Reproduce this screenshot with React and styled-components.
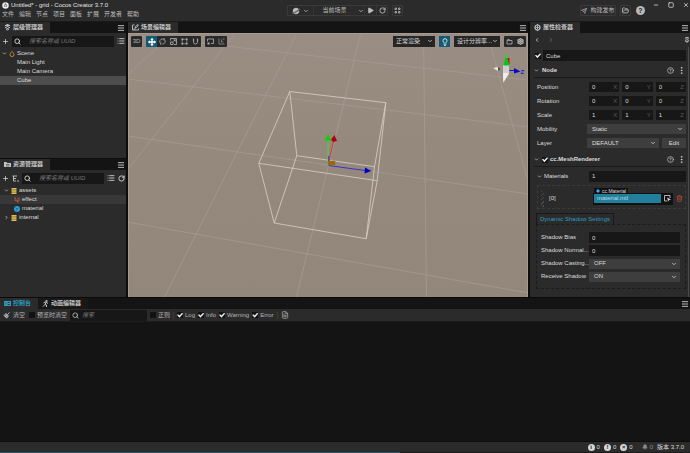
import React from "react";
import styled, { createGlobalStyle, css } from "styled-components";
import {
  ChevronDown, ChevronRight, ChevronLeft, Menu, List, RotateCw, Search, Plus, Play,
  FolderOpen, Minus, Square, X, Pin, CircleHelp, EllipsisVertical, Trash2, Lightbulb, Settings,
  Send, Bell, FileText,
} from "lucide-react";

const color = {
  panel: "#2b2b2b",
  dark: "#141414",
  field: "#171717",
  select: "#3e3e3e",
  line: "#1a1a1a",
  text: "#dcdcdc",
  dim: "#8a8a8a",
  accent: "#2d9cc0",
};

const GlobalStyle = createGlobalStyle`
  * { box-sizing: border-box; }
  html, body, #root { height: 100%; }
  body {
    margin: 0;
    overflow: hidden;
    background: #0d0d0d;
    color: ${color.text};
    font: 6px/9px "Liberation Sans", "Noto Sans CJK SC", sans-serif;
  }
  button, input, select { font: inherit; color: inherit; margin: 0; padding: 0; border: 0; border-radius: 0; outline: 0; }
  button { background: none; display: inline-flex; align-items: center; justify-content: center; }
  svg { display: block; flex: none; }
`;

const Page = styled.div`
  height: 100vh;
  display: grid;
  grid-template-rows: 22px minmax(0, 275fr) minmax(0, 144fr) 11px 1px;
`;

/* ---------- header ---------- */
const Header = styled.header`
  display: grid;
  grid-template-columns: 1fr auto 1fr;
  background: ${color.panel};
  border-bottom: 1px solid ${color.line};
`;
const TitleLine = styled.div`
  display: flex;
  align-items: center;
  gap: 2px;
  height: 10px;
  padding-left: 2px;
  white-space: nowrap;
  color: #e6e6e6;
`;
const MenuBar = styled.nav`
  display: flex;
  gap: 5px;
  padding-left: 2px;
  color: #bcbcbc;
`;
const Centered = styled.div`
  display: flex;
  align-items: center;
  gap: 4px;
`;
const Outlined = styled.div`
  display: flex;
  align-items: center;
  height: 11px;
  border: 1px solid #3a3a3a;
  border-radius: 1px;
  color: #bdbdbd;
  > * + * { border-left: 1px solid #363636; }
`;
const HeadButton = styled.button`
  width: ${(p) => p.$w}px;
  height: 9px;
  gap: 3px;
  white-space: nowrap;
`;
const HeaderRight = styled.div`
  display: flex;
  justify-content: flex-end;
  gap: 8px;
`;
const WindowControls = styled.div`
  display: flex;
  gap: 9px;
  height: 9px;
  padding-right: 1px;
`;
const HelpButton = styled.button`
  width: 9px;
  height: 9px;
  margin-left: 1px;
  border-radius: 50%;
  background: #b9b9b9;
  color: #222;
  font-weight: bold;
  font-size: 7px;
`;

/* ---------- panels ---------- */
const Main = styled.main`
  display: grid;
  grid-template-columns: 126px minmax(0, 1fr) 160px;
  column-gap: 2px;
  min-height: 0;
`;
const LeftColumn = styled.div`
  display: grid;
  grid-template-rows: 136fr 138fr;
  row-gap: 1px;
  min-height: 0;
`;
const Panel = styled.section`
  display: flex;
  flex-direction: column;
  min-width: 0;
  min-height: 0;
  overflow: hidden;
  background: ${color.panel};
`;
const Tabs = styled.div`
  display: flex;
  flex: none;
  height: 11px;
  background: ${color.dark};
`;
const DockTabs = styled(Tabs)`
  height: 12px;
  border-top: 1px solid #0a0a0a;
`;
const Tab = styled.button`
  gap: 2px;
  padding: 0 7px 0 4px;
  font-weight: bold;
  white-space: nowrap;
  background: ${(p) => (p.$idle ? "#181818" : color.panel)};
  color: ${(p) => (p.$accent ? color.accent : "#c4c4c4")};
`;
const TabMenu = styled.button`
  margin-left: auto;
  padding-right: 1px;
`;
const Tools = styled.div`
  display: flex;
  flex: none;
  align-items: center;
  gap: 3px;
  height: 15px;
  padding: 1px 1px 0 2px;
`;
const SearchBox = styled.label`
  display: flex;
  flex: ${(p) => (p.$fixed ? "none" : "1")};
  width: ${(p) => (p.$fixed ? "77px" : "auto")};
  min-width: 0;
  align-items: center;
  gap: ${(p) => (p.$fixed ? 3 : 8)}px;
  height: 11px;
  padding-left: 2px;
  background: ${color.field};
  input { flex: 1; min-width: 0; background: none; }
  input::placeholder { color: #777; font-style: italic; opacity: 1; }
`;
const Tree = styled.ul`
  margin: 1px 0 0;
  padding: 0;
  list-style: none;
`;
const TreeRow = styled.li`
  display: flex;
  align-items: center;
  gap: 2px;
  height: 9px;
  padding-left: ${(p) => p.$indent}px;
  background: ${(p) => p.$bg || "transparent"};
`;

/* ---------- scene ---------- */
const Viewport = styled.div`
  position: relative;
  flex: 1;
  min-height: 0;
  overflow: hidden;
  border: 1px solid #a69a91;
  border-bottom: 0;
  background: linear-gradient(#9a8d83, #95897d 45%, #93877b);
`;
const SceneSvg = styled.svg`
  position: absolute;
  inset: 0;
  width: 100%;
  height: 100%;
`;
const Overlay = styled.div`
  position: absolute;
  inset: 2px 1px auto 2px;
  display: flex;
  gap: 4px;
`;
const ToolGroup = styled.div`
  display: flex;
  height: 11px;
  background: #292929;
  border-radius: 1px;
`;
const ToolButton = styled.button`
  width: 11px;
  height: 11px;
  background: ${(p) => (p.$on ? "#135a76" : "transparent")};
  color: ${(p) => (p.$on ? "#ffffff" : "#b4b4b4")};
`;
const Spring = styled.div`
  flex: 1;
`;

/* ---------- form controls ---------- */
const SelectWrap = styled.div`
  position: relative;
  flex: ${(p) => (p.$w ? "none" : "1")};
  width: ${(p) => (p.$w ? p.$w + "px" : "auto")};
  height: ${(p) => (p.$overlay ? 11 : 10)}px;
  background: ${(p) => (p.$overlay ? "#252525" : color.select)};
  select {
    appearance: none;
    width: 100%;
    height: 100%;
    padding: 0 0 0 ${(p) => (p.$overlay ? 3 : 5)}px;
    background: none;
  }
  svg {
    position: absolute;
    right: ${(p) => (p.$overlay ? 2 : 3)}px;
    top: 2px;
    pointer-events: none;
  }
`;
const Check = styled.input`
  appearance: none;
  flex: none;
  width: 6px;
  height: 6px;
  background: #121212;
  &:checked::before {
    content: "";
    display: block;
    width: 6px;
    height: 6px;
    background: #eeeeee;
    clip-path: polygon(0 52%, 18% 36%, 40% 60%, 84% 12%, 100% 28%, 40% 94%);
  }
`;
const TextInput = styled.input`
  flex: 1;
  min-width: 0;
  width: 100%;
  height: ${(p) => (p.$tall ? 11 : 10)}px;
  padding: 0 3px;
  background: ${color.field};
`;
const InspectorBody = styled.div`
  flex: 1;
  min-height: 0;
  overflow: hidden;
  margin-right: 1px;
  padding: 3px 2px 4px 4px;
  border-right: 1px solid #4a4a4a;
`;
const InspectorNav = styled(Tools)`
  gap: 8px;
  padding: 0 0 0 4px;
  height: 14px;
`;
const NameRow = styled.div`
  display: flex;
  align-items: center;
  gap: 2px;
  padding-left: 1px;
`;
const SectionHead = styled.div`
  display: flex;
  align-items: center;
  gap: 3px;
  height: 14px;
  margin: 3px 0 2px;
  border-bottom: 1px solid ${color.line};
  font-weight: bold;
`;
const Field = styled.div`
  display: grid;
  grid-template-columns: ${(p) => (p.$nested ? 48 : 50)}px minmax(0, 1fr);
  align-items: center;
  height: ${(p) => (p.$nested ? 13 : 14)}px;
  padding-left: ${(p) => (p.$nested ? 0 : 3)}px;
`;
const FieldLabel = styled.label`
  display: flex;
  align-items: center;
  gap: 2px;
  white-space: nowrap;
`;
const FieldBody = styled.div`
  display: flex;
  gap: 3px;
  min-width: 0;
  padding-left: ${(p) => (p.$inset ? 2 : 0)}px;
`;
const AxisBox = styled.label`
  display: flex;
  flex: 1;
  min-width: 0;
  align-items: center;
  padding-right: 2px;
  background: ${color.field};
  color: #5c5c5c;
  input { color: ${color.text}; background: none; }
`;
const EditButton = styled.button`
  width: 24px;
  height: 10px;
  background: ${color.select};
`;
const MaterialItem = styled.div`
  display: flex;
  align-items: center;
  height: 24px;
  margin: 2px 0 4px 3px;
  padding: 3px 2px 0 3px;
  border: 1px dashed #3b3b3b;
`;
const DragHandle = styled.div`
  width: 3px;
  height: 16px;
  background: repeating-linear-gradient(135deg, #4a4a4a 0 1px, transparent 1px 3px);
`;
const ItemIndex = styled.span`
  width: 49px;
  padding-left: 5px;
`;
const AssetSlot = styled.div`
  position: relative;
  display: flex;
  flex: 1;
  align-items: center;
  gap: 3px;
  height: 12px;
  margin-right: 3px;
  padding: 1px 2px 1px 1px;
  background: #111111;
`;
const AssetTag = styled.span`
  position: absolute;
  left: 1px;
  top: -5px;
  display: flex;
  align-items: center;
  gap: 2px;
  height: 6px;
  padding: 0 2px;
  background: #111111;
  font-size: 5px;
  line-height: 6px;
  white-space: nowrap;
`;
const AssetName = styled.button`
  flex: 1;
  height: 9px;
  padding-left: 3px;
  justify-content: flex-start;
  background: #227f9b;
  color: #b9dce6;
`;
const ShadowTab = styled.button`
  height: 11px;
  padding: 0 3px;
  border: 1px solid #181818;
  border-bottom: 0;
  color: ${color.accent};
`;
const ShadowBox = styled.div`
  padding: 6px 5px 5px 4px;
  border: 1px dashed #1c1c1c;
`;
const ShadowGroup = styled.div`
  margin-left: 2px;
`;

/* ---------- console ---------- */
const ConsoleTools = styled(Tools)`
  height: 13px;
  padding: 0 4px;
  border-bottom: 1px solid #1c1c1c;
  color: #b5b5b5;
`;
const CheckLabel = styled.label`
  display: flex;
  align-items: center;
  gap: 2px;
  margin-left: ${(p) => p.$gap || 0}px;
  white-space: nowrap;
`;
const Divider = styled.i`
  width: 1px;
  height: 7px;
  background: #3a3a3a;
`;
const ConsoleOutput = styled.div`
  flex: 1;
  background: ${color.dark};
`;
const StatusBar = styled.footer`
  display: flex;
  align-items: center;
  justify-content: flex-end;
  gap: 4px;
  padding-right: 6px;
  border-top: 1px solid #0d0d0d;
  background: ${color.panel};
`;
const Status = styled.span`
  display: flex;
  align-items: center;
  gap: 2px;
  ${(p) => p.$dim && css`
    margin-left: 5px;
    color: ${color.dim};
  `}
`;
const Dot = styled.span`
  width: 7px;
  height: 7px;
  border-radius: 50%;
  background: #d5d5d5;
  color: #222;
  font: bold 6px/7px "Liberation Sans", sans-serif;
  text-align: center;
`;
const Progress = styled.div`
  background: linear-gradient(90deg, #2b5564 58%, #1c1c1c 58%);
`;

/* ---------- drawings ---------- */
const Glyph = ({ size = 7, children }) => (
  <svg width={size} height={size} viewBox="0 0 14 14" fill="none" stroke="currentColor" strokeWidth="1.6">
    {children}
  </svg>
);
const MoveIcon = () => (
  <Glyph size={8}>
    <path d="M7 1v12M1 7h12" strokeWidth="2.4" />
    <path d="M4 3.6 7 0l3 3.6zM4 10.4 7 14l3-3.6zM3.6 4 0 7l3.6 3zM10.4 4 14 7l-3.6 3z" fill="currentColor" stroke="none" />
  </Glyph>
);
const RotateIcon = () => (
  <Glyph><path d="M3 10.5A5 5 0 0 1 7 2h3M7 12a5 5 0 0 0 4-8.500M9 0l2.500 2L9 4.500M5 9.500 2.500 12 5 14" /></Glyph>
);
const ScaleIcon = () => (
  <Glyph><path d="M1 5V1h12v12H8M1 8h5v5H1zM7 7l3.500-3.500M7 3.500h3.500V7" /></Glyph>
);
const RectIcon = () => (
  <Glyph>
    <path d="M2.500 2.500h9v9h-9z" strokeWidth="1" />
    <path d="M1 1h3.400v3.400H1zM9.600 1H13v3.400H9.600zM1 9.600h3.400V13H1zM9.600 9.600H13V13H9.600z" fill="currentColor" stroke="none" />
  </Glyph>
);
const PivotIcon = () => (
  <Glyph><path d="M1 7V2h12v9H8" /><path d="M1 9h4v4H1z" fill="currentColor" stroke="none" /></Glyph>
);
const AxisIcon = () => (
  <Glyph><path d="M2 1v11h11M7 3v5h4M9 2h4" opacity=".75" /></Glyph>
);
const StackIcon = () => (
  <Glyph>
    <path d="M7 0l6 3-6 3-6-3z" fill="currentColor" stroke="none" />
    <path d="M2 6.500l5 2.500 5-2.500M4 10l3 2 3-2" strokeWidth="2" />
  </Glyph>
);
const SceneTabIcon = () => (
  <Glyph><path d="M5 2H1v10h12V9M6 8l1-3 5-4 1 1-4 5zM3 10h4" strokeWidth="1.800" /></Glyph>
);
const InspectorTabIcon = () => (
  <Glyph>
    <circle cx="7" cy="7" r="5" strokeWidth="2.400" />
    <path d="M7 4v6M4 7h6M7 0v2M7 12v2" />
  </Glyph>
);
const ConsoleTabIcon = () => (
  <Glyph>
    <path d="M0 2h14v10H0z" fill="currentColor" stroke="none" />
    <path d="M2 5l2 2-2 2M7 5h5M7 9h5" stroke={color.panel} />
  </Glyph>
);
const FolderTabIcon = () => (
  <Glyph>
    <path d="M0 2h5l1 2h8v8H0z" fill="currentColor" stroke="none" />
    <path d="M4 7h7M4 10h7" stroke={color.panel} strokeWidth="1.200" />
  </Glyph>
);
const BroomIcon = () => (
  <Glyph>
    <path d="M1 7l5-5 6 6-5 5z" fill="currentColor" stroke="none" />
    <path d="M9 5l4-4M4 6l5 5" strokeWidth="2" />
    <path d="M3 8l4-4M6 11l4-4" stroke={color.panel} strokeWidth="1" />
  </Glyph>
);
const GridIcon = () => (
  <Glyph>
    <path d="M2 2h3v3H2zM9 2h3v3H9zM2 9h3v3H2zM9 9h3v3H9z" />
  </Glyph>
);
const CocosLogo = () => (
  <svg width="7" height="7" viewBox="0 0 14 14">
    <circle cx="7" cy="7" r="6.500" fill="#eee" />
    <path d="M7 2c3 3 4 5 3 8H4C3 7 5 5 7 2z" fill="#888" />
    <circle cx="7" cy="8" r="1.500" fill="#eee" />
  </svg>
);
const PlanetIcon = () => (
  <svg width="8" height="8" viewBox="0 0 16 16" fill="none" stroke="#bdbdbd">
    <circle cx="8" cy="8" r="6" fill="#bdbdbd" />
    <path d="M0 12C3 13 14 7 16 3" stroke="#2b2b2b" strokeWidth="2.500" />
    <path d="M0 12C3 13 14 7 16 3" strokeWidth="1" />
  </svg>
);
const SceneNodeIcon = () => (
  <Glyph size={6}><path d="M7 1c3 3 4.500 5 4.500 8a4.500 4 0 0 1-9 0C2.500 6 4 4 7 1z" stroke="#e08a3c" strokeWidth="2" /></Glyph>
);
const DatabaseIcon = () => (
  <svg width="6" height="6" viewBox="0 0 12 12" fill="#e6bd4c">
    <rect x="1" width="10" height="3.400" /><rect x="1" y="4.300" width="10" height="3.400" /><rect x="1" y="8.600" width="10" height="3.400" />
  </svg>
);
const EffectIcon = () => (
  <svg width="6" height="6" viewBox="0 0 12 12" fill="none" stroke="#e0653f" strokeWidth="1.600">
    <path d="M0 2h4M3 4l7 7M7 3l4-1M1 6l3 1M6 6l1 5M8 6h4" />
  </svg>
);
const MaterialIcon = () => (
  <svg width="6" height="6" viewBox="0 0 12 12">
    <circle cx="6" cy="6" r="6" fill="#2b9fd8" /><path d="M3 3l3 3 3-2M4 9l3-2" stroke="#155d86" strokeWidth="1.500" fill="none" />
  </svg>
);
const RunnerIcon = () => (
  <Glyph><circle cx="9" cy="2" r="1.500" fill="currentColor" /><path d="M3 6l3-2 3 1 3 2M8 5 6 9l3 1v4M6 9l-4 4" strokeWidth="2" /></Glyph>
);
const SortIcon = () => (
  <Glyph><path d="M1 2h9M3 2v10h5M3 7h5M10 12h4" /></Glyph>
);
const PickIcon = () => (
  <Glyph><path d="M7 12H1V1h11v5" /><path d="M6 5l8 4-3.500 1L9 13z" fill="currentColor" stroke="none" /></Glyph>
);

const gridLines = [
  [128, 35, 529, 80], [128, 79, 529, 127], [128, 136, 529, 194], [128, 222, 529, 293],
  [172, 34, 128, 75], [235, 34, 128, 170], [297, 34, 165, 297], [361, 34, 297, 297],
  [424, 34, 427, 297], [488, 34, 529, 183],
];

const SceneDrawing = () => (
  <SceneSvg viewBox="128 34 401 263" preserveAspectRatio="xMidYMid slice" fill="none">
    <g stroke="#a59b95" strokeWidth=".8">
      {gridLines.map(([x1, y1, x2, y2], i) => <line key={i} x1={x1} y1={y1} x2={x2} y2={y2} />)}
    </g>
    <path
      d="M290.300 91.500 386.300 102.700 377.700 180.700 259.300 163.300ZM290.300 91.500 297.300 155.700 375 166.700 386.300 102.700M297.300 155.700 274.700 223 366.700 238.700 375 166.700M259.300 163.300 274.700 223M377.700 180.700 366.700 238.700"
      stroke="#d8d0c8" strokeWidth=".8" />
    <path d="M328.500 164V138" stroke="#45dc3c" />
    <path d="M329 163 334 141" stroke="#d83535" />
    <path d="M329 165.500 366 170.500M329.300 156v8" stroke="#3030c8" />
    <path d="M325.500 140.500 328.500 134 331.500 140.500z" fill="#00d600" />
    <path d="M331.500 139.500 335 135 337.500 141 333.500 142z" fill="#ad0505" />
    <path d="M365.500 167.500 372 171 365 173.500z" fill="#0000c8" />
    <path d="M328.500 161h7v4h-7z" fill="#b75a10" stroke="#4b9b20" strokeWidth=".5" />
    <path d="M493.500 68l5-1v4z" fill="#e6e6e6" />
    <path d="M498.500 67l2 1v2l-2 1z" fill="#555" />
    <path d="M503.500 65h6v9l-6 8.500z" fill="#cfcfcf" />
    <path d="M503.500 73h6l-5.500 9.500z" fill="#eeeeee" />
    <path d="M507.500 58h2.500v6h-2z" fill="#d00" />
    <path d="M504 65.500 506 58h2l2 7.500z" fill="#00c914" />
    <path d="M505 54.500l2 1.500 2-1.500M507 56v2" stroke="#24db29" />
    <path d="M510 70.500h5" stroke="#1010d0" />
    <path d="M514.500 68 521 71.500 514.500 73.500z" fill="#0808c8" />
    <path d="M521.500 70.500h3l-3 3h3" stroke="#2020e0" strokeWidth=".8" />
  </SceneSvg>
);

/* ---------- pieces ---------- */
const Select = ({ value, w, overlay, label }) => (
  <SelectWrap $w={w} $overlay={overlay}>
    <select aria-label={label || value} defaultValue={value}><option>{value}</option></select>
    <ChevronDown size={6} strokeWidth={3} />
  </SelectWrap>
);

const Vector = ({ name, value }) => (
  <Field>
    <FieldLabel as="span">{name}</FieldLabel>
    <FieldBody $inset>
      {["X", "Y", "Z"].map((axis) => (
        <AxisBox key={axis}>
          <TextInput aria-label={`${name} ${axis}`} defaultValue={value} />{axis}
        </AxisBox>
      ))}
    </FieldBody>
  </Field>
);

const NumberField = ({ name, id }) => (
  <Field $nested>
    <FieldLabel htmlFor={id}>{name}</FieldLabel>
    <FieldBody><TextInput $tall id={id} defaultValue="0" /></FieldBody>
  </Field>
);

const SearchField = ({ placeholder, fixed }) => (
  <SearchBox $fixed={fixed}>
    <Search size={7} strokeWidth={3} />
    <input placeholder={placeholder} aria-label={placeholder} />
  </SearchBox>
);

const MenuButton = () => <TabMenu aria-label="menu"><Menu size={8} strokeWidth={2.5} /></TabMenu>;

const Hierarchy = () => (
  <Panel>
    <Tabs><Tab><StackIcon />层级管理器</Tab><MenuButton /></Tabs>
    <Tools>
      <button aria-label="add"><Plus size={7} strokeWidth={2.5} /></button>
      <SearchField placeholder="搜索名称或 UUID" />
      <button aria-label="list"><List size={8} strokeWidth={2.5} /></button>
    </Tools>
    <Tree>
      <TreeRow $indent={2}><ChevronDown size={5} strokeWidth={3} /><SceneNodeIcon />Scene</TreeRow>
      <TreeRow $indent={17}>Main Light</TreeRow>
      <TreeRow $indent={17}>Main Camera</TreeRow>
      <TreeRow $indent={17} $bg="#4d4d4d">Cube</TreeRow>
    </Tree>
  </Panel>
);

const Assets = () => (
  <Panel>
    <Tabs><Tab><FolderTabIcon />资源管理器</Tab><MenuButton /></Tabs>
    <Tools>
      <button aria-label="add"><Plus size={7} strokeWidth={2.5} /></button>
      <button aria-label="sort"><SortIcon /></button>
      <SearchField placeholder="搜索名称或 UUID" />
      <button aria-label="list"><List size={8} strokeWidth={2.5} /></button>
      <button aria-label="refresh"><RotateCw size={7} strokeWidth={3} /></button>
    </Tools>
    <Tree>
      <TreeRow $indent={4}><ChevronDown size={5} strokeWidth={3} /><DatabaseIcon />assets</TreeRow>
      <TreeRow $indent={14} $bg="#383838"><EffectIcon />effect</TreeRow>
      <TreeRow $indent={14}><MaterialIcon />material</TreeRow>
      <TreeRow $indent={4}><ChevronRight size={5} strokeWidth={3} /><DatabaseIcon />internal</TreeRow>
    </Tree>
  </Panel>
);

const Scene = () => (
  <Panel>
    <Tabs><Tab><SceneTabIcon />场景编辑器</Tab><MenuButton /></Tabs>
    <Viewport>
      <SceneDrawing />
      <Overlay>
        <ToolGroup><ToolButton>3D</ToolButton></ToolGroup>
        <ToolGroup>
          <ToolButton $on aria-label="move"><MoveIcon /></ToolButton>
          <ToolButton aria-label="rotate"><RotateIcon /></ToolButton>
          <ToolButton aria-label="scale"><ScaleIcon /></ToolButton>
          <ToolButton aria-label="rect"><RectIcon /></ToolButton>
          <ToolButton aria-label="snap"><Glyph><path d="M3 1v7a4 4 0 0 0 8 0V1M1.500 4h3M9.500 4h3" /></Glyph></ToolButton>
        </ToolGroup>
        <ToolGroup>
          <ToolButton aria-label="pivot"><PivotIcon /></ToolButton>
          <ToolButton aria-label="axis"><AxisIcon /></ToolButton>
        </ToolGroup>
        <Spring />
        <Select overlay w={42} value="正常渲染" />
        <ToolGroup><ToolButton $on aria-label="light"><Lightbulb size={8} strokeWidth={2.5} /></ToolButton></ToolGroup>
        <Select overlay w={46} value="设计分辨率..." />
        <ToolGroup>
          <ToolButton aria-label="camera"><Glyph><path d="M2 5h10v7H2zM3 5l1-3 4 2" /></Glyph></ToolButton>
          <ToolButton aria-label="settings"><Settings size={7} strokeWidth={4} /></ToolButton>
        </ToolGroup>
      </Overlay>
    </Viewport>
  </Panel>
);

const Inspector = () => (
  <Panel>
    <Tabs><Tab><InspectorTabIcon />属性检查器</Tab><MenuButton /></Tabs>
    <InspectorNav>
      <button aria-label="back"><ChevronLeft size={6} strokeWidth={3} /></button>
      <button aria-label="forward"><ChevronRight size={6} strokeWidth={3} color="#777" /></button>
      <Spring />
      <button aria-label="pin"><Pin size={6} strokeWidth={3} /></button>
    </InspectorNav>
    <InspectorBody>
      <NameRow>
        <Check type="checkbox" defaultChecked aria-label="active" />
        <TextInput $tall defaultValue="Cube" aria-label="name" />
      </NameRow>
      <SectionHead>
        <ChevronDown size={5} strokeWidth={3} />Node<Spring />
        <CircleHelp size={7} /><EllipsisVertical size={9} strokeWidth={2} />
      </SectionHead>
      <Vector name="Position" value="0" />
      <Vector name="Rotation" value="0" />
      <Vector name="Scale" value="1" />
      <Field><FieldLabel as="span">Mobility</FieldLabel><FieldBody><Select label="Mobility" value="Static" /></FieldBody></Field>
      <Field><FieldLabel as="span">Layer</FieldLabel><FieldBody><Select label="Layer" value="DEFAULT" /><EditButton>Edit</EditButton></FieldBody></Field>
      <SectionHead>
        <ChevronDown size={5} strokeWidth={3} />
        <CheckLabel><Check type="checkbox" defaultChecked />cc.MeshRenderer</CheckLabel><Spring />
        <CircleHelp size={7} /><EllipsisVertical size={9} strokeWidth={2} />
      </SectionHead>
      <Field>
        <FieldLabel htmlFor="materials"><ChevronDown size={5} strokeWidth={3} />Materials</FieldLabel>
        <FieldBody $inset><TextInput $tall id="materials" defaultValue="1" /></FieldBody>
      </Field>
      <MaterialItem>
        <DragHandle />
        <ItemIndex>[0]</ItemIndex>
        <AssetSlot>
          <AssetTag>
            <svg width="4" height="4" viewBox="0 0 8 8"><path d="M4 0l4 4-4 4-4-4z" fill="#43a9ee" /></svg>
            cc.Material
          </AssetTag>
          <AssetName>material.mtl</AssetName>
          <PickIcon />
        </AssetSlot>
        <button aria-label="delete"><Trash2 size={7} color="#b04a3c" strokeWidth={2.5} /></button>
      </MaterialItem>
      <ShadowGroup>
        <ShadowTab>Dynamic Shadow Settings</ShadowTab>
        <ShadowBox>
          <NumberField id="bias" name="Shadow Bias" />
          <NumberField id="normal" name="Shadow Normal..." />
          <Field $nested><FieldLabel as="span">Shadow Casting...</FieldLabel><FieldBody><Select label="Shadow Casting" value="OFF" /></FieldBody></Field>
          <Field $nested><FieldLabel as="span">Receive Shadow</FieldLabel><FieldBody><Select label="Receive Shadow" value="ON" /></FieldBody></Field>
        </ShadowBox>
      </ShadowGroup>
    </InspectorBody>
  </Panel>
);

const ConsolePanel = () => (
  <Panel>
    <DockTabs>
      <Tab $accent><ConsoleTabIcon />控制台</Tab>
      <Tab $idle><RunnerIcon />动画编辑器</Tab>
      <MenuButton />
    </DockTabs>
    <ConsoleTools>
      <HeadButton $w={20}><BroomIcon />清空</HeadButton>
      <CheckLabel $gap={2}><Check type="checkbox" />预览时清空</CheckLabel>
      <SearchField fixed placeholder="搜索" />
      <CheckLabel><Check type="checkbox" />正则</CheckLabel>
      <Divider />
      {["Log", "Info", "Warning", "Error"].map((level) => (
        <CheckLabel key={level}><Check type="checkbox" defaultChecked />{level}</CheckLabel>
      ))}
      <Divider />
      <button aria-label="open log"><FileText size={8} strokeWidth={2} /></button>
    </ConsoleTools>
    <ConsoleOutput />
  </Panel>
);

export default function App() {
  return (
    <>
      <GlobalStyle />
      <Page>
        <Header>
          <div>
            <TitleLine><CocosLogo />Untitled* - grid - Cocos Creator 3.7.0</TitleLine>
            <MenuBar>
              {["文件", "编辑", "节点", "项目", "面板", "扩展", "开发者", "帮助"].map((m) => <span key={m}>{m}</span>)}
            </MenuBar>
          </div>
          <Centered>
            <Outlined>
              <HeadButton $w={25} aria-label="platform"><PlanetIcon /><ChevronDown size={6} strokeWidth={3} /></HeadButton>
              <HeadButton $w={51}><Spring />当前场景<Spring /><ChevronDown size={6} strokeWidth={3} /></HeadButton>
              <HeadButton $w={12} aria-label="play"><Play size={7} fill="currentColor" /></HeadButton>
              <HeadButton $w={11} aria-label="reload"><RotateCw size={7} strokeWidth={3} /></HeadButton>
            </Outlined>
            <Outlined><HeadButton $w={9} aria-label="layout"><GridIcon /></HeadButton></Outlined>
          </Centered>
          <HeaderRight>
            <Centered>
              <Outlined><HeadButton $w={34}><Send size={6} strokeWidth={2.5} />构建发布</HeadButton></Outlined>
              <Outlined><HeadButton $w={9} aria-label="open"><FolderOpen size={7} strokeWidth={3} /></HeadButton></Outlined>
              <HelpButton>?</HelpButton>
            </Centered>
            <WindowControls>
              <button aria-label="minimize"><Minus size={6} strokeWidth={3} /></button>
              <button aria-label="maximize"><Square size={6} strokeWidth={3} /></button>
              <button aria-label="close"><X size={6} strokeWidth={3} /></button>
            </WindowControls>
          </HeaderRight>
        </Header>
        <Main>
          <LeftColumn><Hierarchy /><Assets /></LeftColumn>
          <Scene />
          <Inspector />
        </Main>
        <ConsolePanel />
        <StatusBar>
          <Status><Dot>i</Dot>0</Status>
          <Status><Dot>!</Dot>0</Status>
          <Status><Dot>×</Dot>0</Status>
          <Status $dim><Bell size={6} fill="currentColor" />0</Status>
          <span>版本 3.7.0</span>
        </StatusBar>
        <Progress />
      </Page>
    </>
  );
}
